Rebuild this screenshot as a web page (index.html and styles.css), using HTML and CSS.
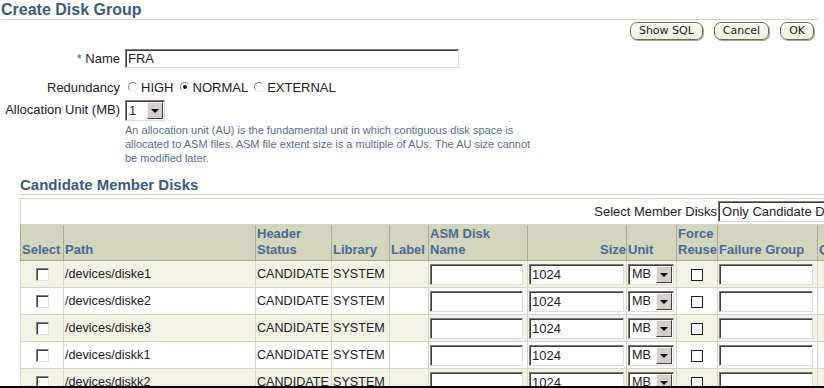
FILE: index.html
```html
<!DOCTYPE html>
<html lang="en">
<head>
  <meta charset="UTF-8" />
  <meta name="viewport" content="width=device-width, initial-scale=1.0" />
  <title>Create Disk Group</title>
  <link rel="stylesheet" href="styles.css">
</head>
<body>
  <div class="page">
    <div class="head">
      <h1 class="title">Create Disk Group</h1>
      <div class="actions">
        <button type="button" class="btn">Show SQL</button>
        <button type="button" class="btn">Cancel</button>
        <button type="button" class="btn">OK</button>
      </div>
    </div>

    <div class="form">
      <div class="form-row row-name">
        <label class="form-label" for="dgname"><span class="req">*</span> Name</label>
        <input class="text name-input" id="dgname" type="text" value="FRA">
      </div>

      <div class="form-row row-redundancy">
        <span class="form-label">Redundancy</span>
        <div class="radios">
          <label class="radio-opt"><span class="radio"></span>HIGH</label>
          <label class="radio-opt"><span class="radio checked"></span>NORMAL</label>
          <label class="radio-opt"><span class="radio"></span>EXTERNAL</label>
        </div>
      </div>

      <div class="form-row row-au">
        <span class="form-label">Allocation Unit (MB)</span>
        <div class="form-field">
          <span class="combo au-combo"><span class="combo-val">1</span><span class="combo-btn"></span></span>
          <p class="tip">An allocation unit (AU) is the fundamental unit in which contiguous disk space is allocated to ASM files. ASM file extent size is a multiple of AUs. The AU size cannot be modified later.</p>
        </div>
      </div>
    </div>

    <h2 class="subhead">Candidate Member Disks</h2>

    <table class="disks">
      <colgroup>
        <col style="width:43px"><col style="width:192px"><col style="width:76px"><col style="width:58px">
        <col style="width:39px"><col style="width:99px"><col style="width:99px"><col style="width:50px">
        <col style="width:41px"><col style="width:100px"><col style="width:60px">
      </colgroup>
      <tr class="toolbar">
        <td colspan="11">
          <div class="toolbar-in">
            <span>Select Member Disks</span>
            <span class="combo filter-combo"><span class="combo-val">Only Candidate Disks</span><span class="combo-btn"></span></span>
          </div>
        </td>
      </tr>
      <tr class="hdr">
        <th>Select</th>
        <th>Path</th>
        <th>Header<br>Status</th>
        <th>Library</th>
        <th>Label</th>
        <th>ASM Disk<br>Name</th>
        <th class="num">Size</th>
        <th>Unit</th>
        <th>Force<br>Reuse</th>
        <th>Failure Group</th>
        <th>Quorum</th>
      </tr>
      <tr class="alt">
        <td class="c-sel"><span class="chk"></span></td>
        <td>/devices/diske1</td>
        <td>CANDIDATE</td>
        <td>SYSTEM</td>
        <td></td>
        <td class="c-asm"><input class="text asm-input" type="text"></td>
        <td class="c-size"><input class="text size-input" type="text" value="1024"></td>
        <td class="c-unit"><span class="combo unit-combo"><span class="combo-val">MB</span><span class="combo-btn"></span></span></td>
        <td class="c-force"><span class="chk flat"></span></td>
        <td class="c-fg"><input class="text fg-input" type="text"></td>
        <td></td>
      </tr>
      <tr>
        <td class="c-sel"><span class="chk"></span></td>
        <td>/devices/diske2</td>
        <td>CANDIDATE</td>
        <td>SYSTEM</td>
        <td></td>
        <td class="c-asm"><input class="text asm-input" type="text"></td>
        <td class="c-size"><input class="text size-input" type="text" value="1024"></td>
        <td class="c-unit"><span class="combo unit-combo"><span class="combo-val">MB</span><span class="combo-btn"></span></span></td>
        <td class="c-force"><span class="chk flat"></span></td>
        <td class="c-fg"><input class="text fg-input" type="text"></td>
        <td></td>
      </tr>
      <tr class="alt">
        <td class="c-sel"><span class="chk"></span></td>
        <td>/devices/diske3</td>
        <td>CANDIDATE</td>
        <td>SYSTEM</td>
        <td></td>
        <td class="c-asm"><input class="text asm-input" type="text"></td>
        <td class="c-size"><input class="text size-input" type="text" value="1024"></td>
        <td class="c-unit"><span class="combo unit-combo"><span class="combo-val">MB</span><span class="combo-btn"></span></span></td>
        <td class="c-force"><span class="chk flat"></span></td>
        <td class="c-fg"><input class="text fg-input" type="text"></td>
        <td></td>
      </tr>
      <tr>
        <td class="c-sel"><span class="chk"></span></td>
        <td>/devices/diskk1</td>
        <td>CANDIDATE</td>
        <td>SYSTEM</td>
        <td></td>
        <td class="c-asm"><input class="text asm-input" type="text"></td>
        <td class="c-size"><input class="text size-input" type="text" value="1024"></td>
        <td class="c-unit"><span class="combo unit-combo"><span class="combo-val">MB</span><span class="combo-btn"></span></span></td>
        <td class="c-force"><span class="chk flat"></span></td>
        <td class="c-fg"><input class="text fg-input" type="text"></td>
        <td></td>
      </tr>
      <tr class="alt">
        <td class="c-sel"><span class="chk"></span></td>
        <td>/devices/diskk2</td>
        <td>CANDIDATE</td>
        <td>SYSTEM</td>
        <td></td>
        <td class="c-asm"><input class="text asm-input" type="text"></td>
        <td class="c-size"><input class="text size-input" type="text" value="1024"></td>
        <td class="c-unit"><span class="combo unit-combo"><span class="combo-val">MB</span><span class="combo-btn"></span></span></td>
        <td class="c-force"><span class="chk flat"></span></td>
        <td class="c-fg"><input class="text fg-input" type="text"></td>
        <td></td>
      </tr>
    </table>
  </div>
  <div class="frame-edge"></div>
</body>
</html>
```

FILE: styles.css
```css
/* Create Disk Group page */
html, body { overflow: hidden; }
body {
  margin: 0;
  font-family: "Liberation Sans", Arial, sans-serif;
  font-size: 13px;
  color: #222;
  background: #fff;
}
.page { padding-left: 1px; }

/* page header */
.head { width: 817px; }
.title {
  margin: 0;
  padding-top: 1px;
  font-size: 16px;
  line-height: 18px;
  color: #3b5a88;
  border-bottom: 1px solid #d2d3bc;
}
.actions {
  display: flex;
  justify-content: flex-end;
  gap: 11px;
  margin-top: 2px;
  padding-right: 4px;
}
.btn {
  height: 18px;
  padding: 0 8px;
  font-family: "DejaVu Sans", Tahoma, sans-serif;
  font-size: 11px;
  line-height: 14px;
  color: #222;
  background: linear-gradient(#fbfbf2, #eeeedd);
  border: 1px solid #6e6e5c;
  border-radius: 7px;
  box-shadow: 1px 1px 0 #a5a592;
}

/* form */
.form { margin-top: 9px; }
.form-row { display: flex; align-items: center; }
.form-label {
  width: 119px;
  margin-right: 5px;
  text-align: right;
  flex-shrink: 0;
}
.req { color: #4a6a94; }
.row-redundancy { margin-top: 11px; height: 16px; }
.row-au { margin-top: 5px; align-items: flex-start; }
.row-au .form-label { line-height: 20px; }
.radios { display: flex; align-items: center; padding-left: 3px; }
.radio-opt { display: flex; align-items: center; gap: 3px; margin-right: 6px; }
.radio {
  position: relative;
  width: 10px;
  height: 10px;
  box-sizing: border-box;
  border-radius: 50%;
  border: 1px solid;
  border-color: #808080 #e8e8e8 #e8e8e8 #808080;
  background: #fff;
}
.radio.checked::after {
  content: "";
  position: absolute;
  left: 2px;
  top: 2px;
  width: 4px;
  height: 4px;
  border-radius: 50%;
  background: #111;
}

.text {
  box-sizing: border-box;
  height: 21px;
  padding: 0 2px;
  font-family: "Liberation Sans", Arial, sans-serif;
  font-size: 13px;
  color: #222;
  background: #fff;
  border: 1px solid;
  border-color: #7b7b7b #dcdcdc #dcdcdc #7b7b7b;
  box-shadow: inset 1px 1px 0 #404040;
  outline: none;
}
.name-input { width: 334px; height: 19px; }

.combo {
  display: inline-flex;
  align-items: center;
  box-sizing: border-box;
  height: 21px;
  padding: 1px;
  background: #fff;
  border: 1px solid;
  border-color: #7b7b7b #dcdcdc #dcdcdc #7b7b7b;
  box-shadow: inset 1px 1px 0 #404040;
  vertical-align: middle;
}
.combo-val { flex: 1; padding-left: 2px; white-space: nowrap; overflow: hidden; }
.combo-btn {
  position: relative;
  flex-shrink: 0;
  width: 16px;
  height: 17px;
  box-sizing: border-box;
  background: #d4d0c8;
  border: 1px solid;
  border-color: #f4f4f4 #404040 #404040 #f4f4f4;
}
.combo-btn::after {
  content: "";
  position: absolute;
  left: 3px;
  top: 6px;
  border-left: 4px solid transparent;
  border-right: 4px solid transparent;
  border-top: 4px solid #000;
}
.au-combo { width: 40px; }
.tip {
  margin: 2px 0 0;
  width: 410px;
  font-size: 11px;
  line-height: 14px;
  color: #5a6e8f;
}

/* candidate disks */
.subhead {
  margin: 11px 0 0 19px;
  font-size: 15px;
  line-height: 18px;
  color: #3b5a88;
  border-bottom: 1px solid #d2d3bc;
}
.disks {
  margin: 3px 0 0 19px;
  table-layout: fixed;
  width: 857px;
  border-collapse: collapse;
}
.disks td, .disks th { padding: 0 1px; border: 1px solid #d6d7c3; }
.toolbar td { height: 25px; padding: 0; }
.toolbar-in {
  display: flex;
  justify-content: flex-end;
  align-items: center;
  gap: 1px;
  padding-right: 3px;
}
.filter-combo { width: 156px; }
.hdr th {
  height: 33px;
  padding: 0 0 2px 1px;
  vertical-align: bottom;
  text-align: left;
  font-size: 13px;
  line-height: 16px;
  color: #4a6a94;
  background: #d3d5bd;
  border-color: #a9aa95;
  white-space: nowrap;
}
.hdr th.num { text-align: right; }
.disks tr.alt td { background: #f2f2e5; }
.disks tr:not(.toolbar):not(.hdr) td { height: 26px; white-space: nowrap; font-size: 12.6px; }
.c-sel, .c-force { text-align: center; }
.c-asm { padding-left: 3px; }
.c-size, .c-unit { padding-left: 1px; }
.asm-input { width: 93px; }
.size-input { width: 95px; }
.fg-input { width: 94px; }
.unit-combo { width: 46px; }
.chk {
  display: inline-block;
  width: 13px;
  height: 13px;
  box-sizing: border-box;
  vertical-align: middle;
  background: #fff;
  border: 1px solid;
  border-color: #808080 #e0e0e0 #e0e0e0 #808080;
  box-shadow: inset 1px 1px 0 #404040;
}
.chk.flat {
  width: 12px;
  height: 12px;
  border: 1px solid #222;
  box-shadow: none;
}

.frame-edge {
  position: fixed;
  left: 0;
  right: 0;
  bottom: 0;
  height: 2px;
  background: #000;
}
```
